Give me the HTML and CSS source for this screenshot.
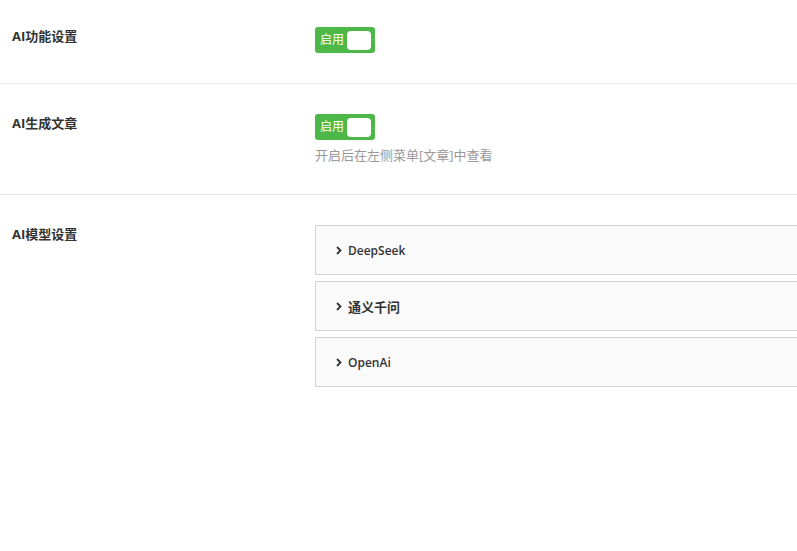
FILE: index.html
```html
<!DOCTYPE html>
<html>
    <head>
        <title>AI设置</title>
        <link rel="stylesheet" href="styles.css">
    </head>
    <body>
        <div class="form">
            <!-- AI功能开关 -->
            <div class="row first">
                <div class="label">AI功能设置</div>
                <div class="field">
                    <div class="switch"><span class="switch-text">启用</span><i class="knob"></i></div>
                </div>
            </div>

            <div class="row second">
                <div class="label">AI生成文章</div>
                <div class="field">
                    <div class="switch"><span class="switch-text">启用</span><i class="knob"></i></div>
                    <p class="hint">开启后在左侧菜单[文章]中查看</p>
                </div>
            </div>

            <!-- 模型列表 -->
            <div class="row last">
                <div class="label">AI模型设置</div>
                <div class="field">
                    <div class="colla">
                        <div class="colla-title">
                            <svg class="arrow" width="6" height="9" viewBox="0 0 6 9"><path d="M1 1l3.5 3.5L1 8" fill="none" stroke="#333" stroke-width="1.8"/></svg>
                            <span>DeepSeek</span>
                        </div>
                    </div>
                    <div class="colla">
                        <div class="colla-title">
                            <svg class="arrow" width="6" height="9" viewBox="0 0 6 9"><path d="M1 1l3.5 3.5L1 8" fill="none" stroke="#333" stroke-width="1.8"/></svg>
                            <span class="cn">通义千问</span>
                        </div>
                    </div>
                    <div class="colla">
                        <div class="colla-title">
                            <svg class="arrow" width="6" height="9" viewBox="0 0 6 9"><path d="M1 1l3.5 3.5L1 8" fill="none" stroke="#333" stroke-width="1.8"/></svg>
                            <span>OpenAi</span>
                        </div>
                    </div>
                </div>
            </div>
        </div>
    </body>
</html>
```

FILE: styles.css
```css
body {
    margin: 0;
    background-color: #fff;
    color: #333;
    font-family: "Open Sans", "Noto Sans CJK SC", sans-serif;
    font-size: 13px;
    overflow: hidden;
}
.form {
    width: 100%;
}
.row {
    display: grid;
    grid-template-columns: 315px 1fr;
    padding: 30px 0 30px 0;
    border-bottom: 1px solid #e6e6e6;
}
.row.first {
    padding-top: 27px;
}
.row.second {
    padding-bottom: 29px;
}
.row.last {
    border-bottom: none;
}
.label {
    padding-left: 12px;
    font-weight: bold;
    line-height: 18px;
    color: #333;
}
.field {
    min-width: 0;
}
.switch {
    display: flex;
    align-items: center;
    width: 60px;
    height: 26px;
    box-sizing: border-box;
    padding: 0 4px 0 5px;
    background-color: #4db848;
    border-radius: 3px;
}
.switch-text {
    color: #fff;
    font-size: 12px;
    line-height: 26px;
}
.knob {
    margin-left: auto;
    width: 24px;
    height: 19px;
    background-color: #fff;
    border-radius: 4px;
}
.hint {
    margin: 5px 0 0 0;
    color: #999;
    line-height: 20px;
}
.colla {
    width: 520px;
    height: 50px;
    box-sizing: border-box;
    margin-bottom: 6px;
    background-color: #fafafa;
    border: 1px solid #d2d2d2;
}
.colla-title {
    display: flex;
    align-items: center;
    height: 48px;
    padding-left: 20px;
    font-size: 12px;
    font-weight: 600;
    color: #333;
}
.colla-title .cn {
    font-size: 13px;
}
.arrow {
    margin-right: 6px;
}
```
